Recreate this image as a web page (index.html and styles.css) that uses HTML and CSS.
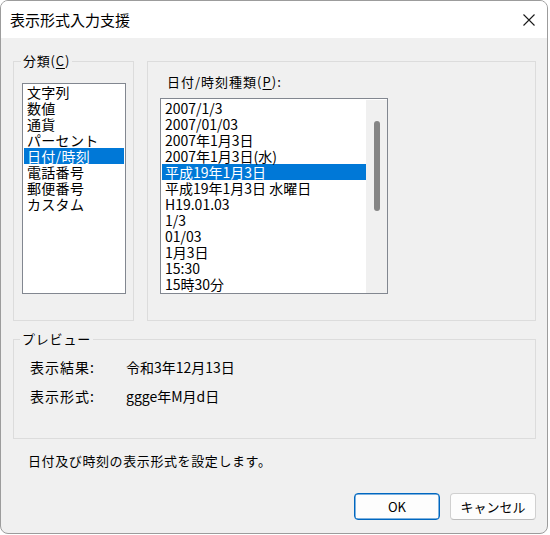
FILE: index.html
```html
<!DOCTYPE html>
<html lang="ja">
<head>
<meta charset="utf-8">
<title>表示形式入力支援</title>
<link rel="stylesheet" href="styles.css">
</head>
<body>
<div class="window">
  <div class="titlebar">
    <span class="title">表示形式入力支援</span>
    <svg class="close" viewBox="0 0 12 12" width="12" height="12"><path d="M0.5 0.5 L11.5 11.5 M11.5 0.5 L0.5 11.5" stroke="#1a1a1a" stroke-width="1.1" fill="none"/></svg>
  </div>
  <div class="body">
    <div class="groups">
      <section class="group group-cat">
        <span class="group-label">分類(<u>C</u>)</span>
        <ul class="listbox list-cat">
          <li class="item">文字列</li>
          <li class="item">数値</li>
          <li class="item">通貨</li>
          <li class="item">パーセント</li>
          <li class="item selected">日付/時刻</li>
          <li class="item">電話番号</li>
          <li class="item">郵便番号</li>
          <li class="item">カスタム</li>
        </ul>
      </section>
      <section class="group group-type">
        <span class="field-label">日付/時刻種類(<u>P</u>):</span>
        <div class="listbox list-type">
          <ul class="items">
            <li class="item">2007/1/3</li>
            <li class="item">2007/01/03</li>
            <li class="item">2007年1月3日</li>
            <li class="item">2007年1月3日(水)</li>
            <li class="item selected">平成19年1月3日</li>
            <li class="item">平成19年1月3日 水曜日</li>
            <li class="item">H19.01.03</li>
            <li class="item">1/3</li>
            <li class="item">01/03</li>
            <li class="item">1月3日</li>
            <li class="item">15:30</li>
            <li class="item">15時30分</li>
          </ul>
          <div class="scrollbar"><div class="thumb"></div></div>
        </div>
      </section>
    </div>
    <section class="group group-preview">
      <span class="group-label">プレビュー</span>
      <div class="preview-grid">
        <span class="preview-key">表示結果:</span><span class="preview-val">令和3年12月13日</span>
        <span class="preview-key">表示形式:</span><span class="preview-val">ggge年M月d日</span>
      </div>
    </section>
    <p class="status">日付及び時刻の表示形式を設定します。</p>
    <div class="buttons">
      <button class="btn btn-primary">OK</button>
      <button class="btn">キャンセル</button>
    </div>
  </div>
</div>
</body>
</html>
```
FILE: styles.css
```css
* { box-sizing: border-box; }
body {
  margin: 0;
  background: #ffffff;
  font-family: "Noto Sans CJK JP", "Noto Sans", sans-serif;
  color: #000;
}
.window {
  width: 548px;
  height: 534px;
  border: 1px solid #9c9c9c;
  border-radius: 8px;
  overflow: hidden;
  background: #f0f0f0;
  display: flex;
  flex-direction: column;
}
.titlebar {
  flex: none;
  height: 37px;
  background: #ffffff;
  display: flex;
  align-items: center;
  justify-content: space-between;
  padding: 0 12px 0 9px;
}
.title { font-size: 15px; line-height: 20px; }
.close { display: block; }
.body {
  display: flex;
  flex-direction: column;
  padding: 23px 11px 0 12px;
}
.groups {
  display: flex;
  gap: 13px;
  height: 260px;
}
.group {
  border: 1px solid #dcdcdc;
  display: flex;
  flex-direction: column;
  align-items: flex-start;
}
.group-cat { width: 121px; }
.group-type { flex: 1; }
.group-label {
  margin: -9px 0 0 7px;
  padding: 0 2px;
  background: #f0f0f0;
  font-size: 13px;
  line-height: 16px;
  letter-spacing: 0.8px;
}
.field-label {
  margin: 12px 0 0 19px;
  font-size: 13px;
  line-height: 16px;
  letter-spacing: 1px;
}
u { text-decoration-thickness: 1px; text-underline-offset: 2px; }
.listbox {
  background: #ffffff;
  border: 1px solid #828790;
  list-style: none;
  margin: 0;
  padding: 0;
  overflow: hidden;
}
.item {
  font-size: 14px;
  line-height: 16px;
  height: 16px;
  padding-left: 3px;
  white-space: nowrap;
}
.list-cat .item { letter-spacing: 0.3px; }
.item.selected { background: #0078d7; color: #ffffff; }
.list-cat {
  margin: 14px 0 0 8px;
  width: 104px;
  height: 211px;
  padding: 0 1px;
}
.list-type {
  margin: 8px 0 0 12px;
  width: 228px;
  height: 196px;
  display: flex;
}
.items {
  flex: 1;
  list-style: none;
  margin: 0;
  padding: 1px 0 0 1px;
}
.scrollbar {
  flex: none;
  width: 21px;
  margin-top: 1px;
  background: #f0f0f0;
  display: flex;
  justify-content: center;
  padding: 21px 0 0 1px;
}
.thumb {
  width: 6px;
  height: 90px;
  background: #858585;
  border-radius: 3px;
}
.group-preview {
  margin-top: 18px;
  height: 100px;
}
.group-preview .group-label { margin-left: 6px; }
.preview-grid {
  display: grid;
  grid-template-columns: 96px auto;
  row-gap: 13px;
  margin: 12px 0 0 16px;
  font-size: 14px;
  line-height: 16px;
}
.preview-key { letter-spacing: 1px; }
.status {
  margin: 14px 0 0 15px;
  font-size: 13px;
  line-height: 16px;
  letter-spacing: 0.6px;
}
.buttons {
  display: flex;
  justify-content: flex-end;
  gap: 10px;
  margin-top: 24px;
}
.btn {
  width: 86px;
  height: 27px;
  border: 1px solid #d0d0d0;
  border-bottom-color: #bdbdbd;
  border-radius: 4px;
  background: #fdfdfd;
  font-family: inherit;
  font-size: 13px;
  line-height: 16px;
  color: #000;
  padding: 0;
}
.btn-primary {
  border: 1px solid #0067c0;
  box-shadow: inset 0 0 0 0.5px #0067c0;
}
```
